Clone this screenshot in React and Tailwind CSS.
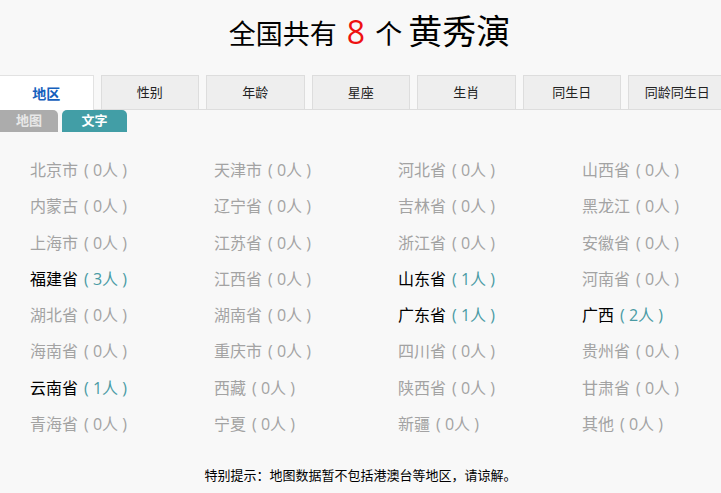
import React from "react";

const tabs = ["地区", "性别", "年龄", "星座", "生肖", "同生日", "同龄同生日"];

const regions = [
  ["北京市", 0], ["天津市", 0], ["河北省", 0], ["山西省", 0],
  ["内蒙古", 0], ["辽宁省", 0], ["吉林省", 0], ["黑龙江", 0],
  ["上海市", 0], ["江苏省", 0], ["浙江省", 0], ["安徽省", 0],
  ["福建省", 3], ["江西省", 0], ["山东省", 1], ["河南省", 0],
  ["湖北省", 0], ["湖南省", 0], ["广东省", 1], ["广西", 2],
  ["海南省", 0], ["重庆市", 0], ["四川省", 0], ["贵州省", 0],
  ["云南省", 1], ["西藏", 0], ["陕西省", 0], ["甘肃省", 0],
  ["青海省", 0], ["宁夏", 0], ["新疆", 0], ["其他", 0],
];

export default function App() {
  return (
    <div className="min-h-[493px] w-full overflow-hidden bg-[#f8f8f8] font-['Open_Sans','Noto_Sans_CJK_SC',sans-serif] text-black">
      {/* heading */}
      <div className="flex h-[75px] items-start justify-center pt-[8px] pl-[18px]">
        <h1 className="flex items-baseline text-[27px] leading-[46px] font-normal">
          <span>全国共有</span>
          <span className="mx-[10px] text-[32px] text-[#ee1111]">8</span>
          <span>个</span>
          <span className="ml-[6px] text-[34px]">黄秀演</span>
        </h1>
      </div>

      {/* category tabs */}
      <div className="flex h-[35px] gap-[7px] border-b border-[#dddddd]">
        {tabs.map((t, i) =>
          i === 0 ? (
            <div
              key={t}
              className="-mb-px flex w-[93.5px] shrink-0 items-center justify-center border-t border-r border-[#e2e2e2] bg-white text-[14px] font-bold text-[#1560bd]"
            >
              {t}
            </div>
          ) : (
            <div
              key={t}
              className="flex w-[98.5px] shrink-0 items-center justify-center border-x border-t border-[#dddddd] bg-[#eeeeee] text-[13px] text-[#222]"
            >
              {t}
            </div>
          )
        )}
      </div>

      {/* map / text switch */}
      <div className="flex h-[22px] gap-[4px]">
        <div className="flex w-[58px] items-center justify-center rounded-tr-[5px] bg-[#acacac] text-[13px] font-bold text-[#e8e8e8]">
          地图
        </div>
        <div className="flex w-[65px] items-center justify-center rounded-t-[5px] bg-[#429ea6] text-[13px] font-bold text-white">
          文字
        </div>
      </div>

      {/* people per region */}
      <ul className="grid grid-cols-[repeat(3,184px)_1fr] pt-[20px] pl-[30px] text-[16px]">
        {regions.map(([name, n]) => (
          <li key={name} className="h-[36.3px] leading-[36px] whitespace-nowrap">
            <span className={n > 0 ? "text-black" : "text-[#a3a3a3]"}>{name}</span>
            <span className={"ml-[6px] " + (n > 0 ? "text-[#4a9ba4]" : "text-[#a3a3a3]")}>
              ( {n}人 )
            </span>
          </li>
        ))}
      </ul>

      <p className="mt-[23px] text-center text-[13px] leading-[20px]">
        特别提示：地图数据暂不包括港澳台等地区，请谅解。
      </p>
    </div>
  );
}
